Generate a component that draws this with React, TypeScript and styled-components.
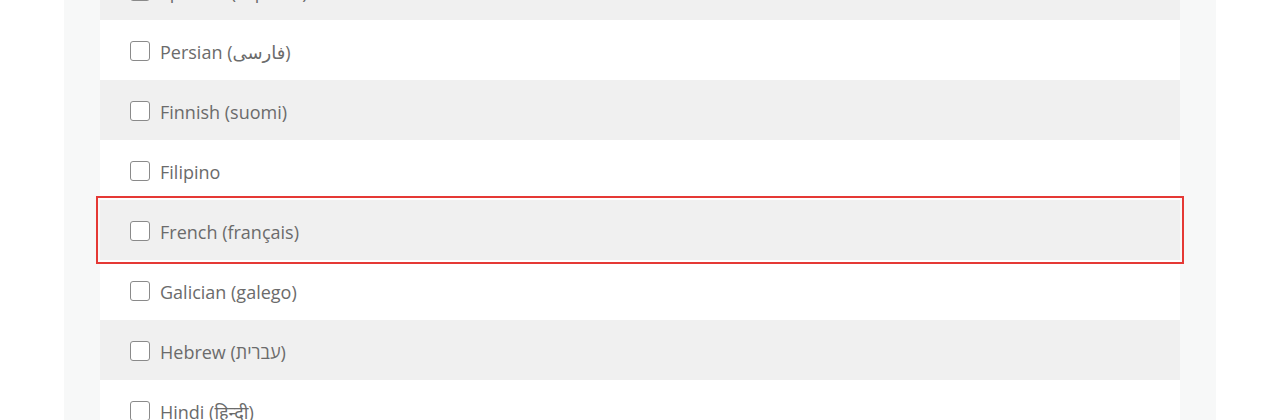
import React from 'react'
import styled, { createGlobalStyle } from 'styled-components'

const languages = [
  'Spanish (español)',
  'Persian (فارسی)',
  'Finnish (suomi)',
  'Filipino',
  'French (français)',
  'Galician (galego)',
  'Hebrew (עברית)',
  'Hindi (हिन्दी)',
]

const highlighted = 'French (français)'

const GlobalStyle = createGlobalStyle`
  html, body {
    margin: 0;
    padding: 0;
    background: #ffffff;
    font-family: 'Open Sans', 'Noto Sans', 'DejaVu Sans', sans-serif;
  }
`

export default function App() {
  return (
    <>
      <GlobalStyle />
      <Page>
        <Panel>
          <List>
            {languages.map((name, i) => (
              <Row key={name} $striped={i % 2 === 0} $selected={name === highlighted}>
                <Checkbox type='checkbox' />
                <Label>{name}</Label>
              </Row>
            ))}
          </List>
        </Panel>
      </Page>
    </>
  )
}

const Page = styled.div`
  display: flex;
  height: 420px;
  overflow: hidden;
  padding: 0 64px;
  background: #ffffff;
`

const Panel = styled.div`
  flex: 1;
  display: flow-root;
  background: #f7f8f8;
  padding: 0 36px;
`

const List = styled.ul`
  list-style: none;
  margin: -40px 0 0;
  padding: 0;
`

const Row = styled.li<{ $striped: boolean; $selected: boolean }>`
  display: flex;
  align-items: center;
  gap: 10px;
  height: 60px;
  padding-left: 30px;
  box-sizing: border-box;
  background: ${(p) => (p.$striped ? '#f0f0f0' : '#ffffff')};
  position: relative;
  ${(p) => p.$selected && `outline: 2px solid #e53935; outline-offset: 2px; z-index: 1;`}
`

const Checkbox = styled.input`
  appearance: none;
  margin: 2px 0 0;
  width: 20px;
  height: 20px;
  border: 1px solid #8a8a8a;
  border-radius: 3px;
  background: #ffffff;
  box-sizing: border-box;
  flex-shrink: 0;
`

const Label = styled.span`
  font-size: 18px;
  color: #6b6b6b;
  line-height: 1;
  padding-top: 3px;
`
